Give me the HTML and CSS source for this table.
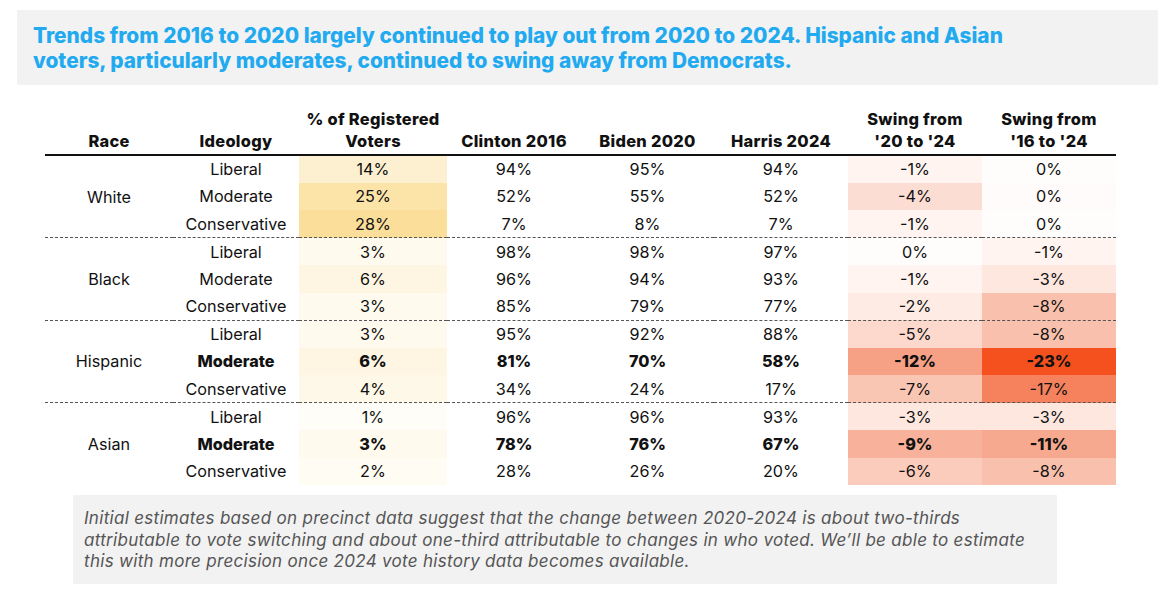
FILE: index.html
```html
<!DOCTYPE html>
<html lang="en">
<head>
<meta charset="utf-8">
<title>Swing by race and ideology</title>
<link rel="stylesheet" href="styles.css">
</head>
<body>
<div class="title-box">
  <h1 class="title">Trends from 2016 to 2020 largely continued to play out from 2020 to 2024. Hispanic and Asian<br>voters, particularly moderates, continued to swing away from Democrats.</h1>
</div>
<table class="data">
  <colgroup>
    <col class="c-race"><col class="c-ideo"><col class="c-reg"><col class="c-num"><col class="c-num2"><col class="c-num"><col class="c-num"><col class="c-num">
  </colgroup>
  <thead>
    <tr>
      <th>Race</th><th>Ideology</th><th>% of Registered<br>Voters</th><th>Clinton 2016</th><th>Biden 2020</th><th>Harris 2024</th><th>Swing from<br>'20 to '24</th><th>Swing from<br>'16 to '24</th>
    </tr>
  </thead>
  <tbody>
    <tr><td rowspan="3" class="race">White</td><td>Liberal</td><td style="background:#fdf0d0">14%</td><td>94%</td><td>95%</td><td>94%</td><td style="background:#fff4f0">-1%</td><td style="background:#fffdfc">0%</td></tr>
    <tr><td>Moderate</td><td style="background:#fce4a8">25%</td><td>52%</td><td>55%</td><td>52%</td><td style="background:#fcddd3">-4%</td><td style="background:#fffbfa">0%</td></tr>
    <tr><td>Conservative</td><td style="background:#fbde99">28%</td><td>7%</td><td>8%</td><td>7%</td><td style="background:#fff4f0">-1%</td><td style="background:#fffdfc">0%</td></tr>

    <tr class="grp"><td rowspan="3" class="race">Black</td><td>Liberal</td><td style="background:#fffaee">3%</td><td>98%</td><td>98%</td><td>97%</td><td style="background:#fffdfc">0%</td><td style="background:#fff4f0">-1%</td></tr>
    <tr><td>Moderate</td><td style="background:#fef6e2">6%</td><td>96%</td><td>94%</td><td>93%</td><td style="background:#fff4f0">-1%</td><td style="background:#fde7df">-3%</td></tr>
    <tr><td>Conservative</td><td style="background:#fffaee">3%</td><td>85%</td><td>79%</td><td>77%</td><td style="background:#feebe4">-2%</td><td style="background:#f9c1ad">-8%</td></tr>

    <tr class="grp"><td rowspan="3" class="race">Hispanic</td><td>Liberal</td><td style="background:#fffaee">3%</td><td>95%</td><td>92%</td><td>88%</td><td style="background:#fcd9cc">-5%</td><td style="background:#f9c1ad">-8%</td></tr>
    <tr class="bold"><td>Moderate</td><td style="background:#fef6e2">6%</td><td>81%</td><td>70%</td><td>58%</td><td style="background:#f6a185">-12%</td><td style="background:#f5511f">-23%</td></tr>
    <tr><td>Conservative</td><td style="background:#fef8e8">4%</td><td>34%</td><td>24%</td><td>17%</td><td style="background:#fac6b4">-7%</td><td style="background:#f5825d">-17%</td></tr>

    <tr class="grp"><td rowspan="3" class="race">Asian</td><td>Liberal</td><td style="background:#fffdf8">1%</td><td>96%</td><td>96%</td><td>93%</td><td style="background:#fde7df">-3%</td><td style="background:#fde7df">-3%</td></tr>
    <tr class="bold"><td>Moderate</td><td style="background:#fffaee">3%</td><td>78%</td><td>76%</td><td>67%</td><td style="background:#f8b29b">-9%</td><td style="background:#f7a98f">-11%</td></tr>
    <tr><td>Conservative</td><td style="background:#fffcf4">2%</td><td>28%</td><td>26%</td><td>20%</td><td style="background:#fbcbbb">-6%</td><td style="background:#f9c1ad">-8%</td></tr>
  </tbody>
</table>
<div class="note">
  <p>Initial estimates based on precinct data suggest that the change between 2020-2024 is about two-thirds<br>attributable to vote switching and about one-third attributable to changes in who voted. We’ll be able to estimate<br>this with more precision once 2024 vote history data becomes available.</p>
</div>
</body>
</html>
```

FILE: styles.css
```css
html, body {
  margin: 0;
  padding: 0;
  background: #ffffff;
}

body {
  font-family: "Inter", "Noto Sans", "Liberation Sans", sans-serif;
  color: #111111;
  padding-top: 10px;
}

.title-box {
  margin-left: 17px;
  height: 75px;
  background: #f2f2f2;
  padding: 13px 0 0 16px;
  box-sizing: border-box;
}

.title {
  margin: 0;
  font-size: 20.85px;
  line-height: 25px;
  font-weight: 800;
  color: #22aaf0;
  letter-spacing: 0;
}

.data {
  margin-left: 45px;
  margin-top: 20px;
  width: 1071px;
  table-layout: fixed;
  border-collapse: collapse;
  font-size: 16.2px;
}

.c-race { width: 128px; }
.c-ideo { width: 126px; }
.c-reg { width: 148px; }
.c-num { width: 134px; }
.c-num2 { width: 133px; }

.data th {
  font-size: 16.4px;
  font-weight: 800;
  letter-spacing: 0.3px;
  text-align: center;
  vertical-align: bottom;
  line-height: 22px;
  padding: 0 0 2px 0;
  border-bottom: 2.5px solid #111111;
  height: 50px;
  box-sizing: border-box;
}

.data td {
  text-align: center;
  vertical-align: middle;
  height: 27.5px;
  padding: 0;
  line-height: 20px;
  box-sizing: border-box;
}

.data tr.grp td {
  border-top: 1px dashed #555555;
}

.data tr.bold td {
  font-weight: 800;
}

.note {
  margin: 10px 0 0 73px;
  width: 984px;
  height: 89px;
  background: #f2f2f2;
  box-sizing: border-box;
  padding: 13px 0 0 11px;
}

.note p {
  margin: 0;
  font-style: italic;
  font-size: 17px;
  letter-spacing: 0.3px;
  line-height: 21.5px;
  color: #555555;
}
```
